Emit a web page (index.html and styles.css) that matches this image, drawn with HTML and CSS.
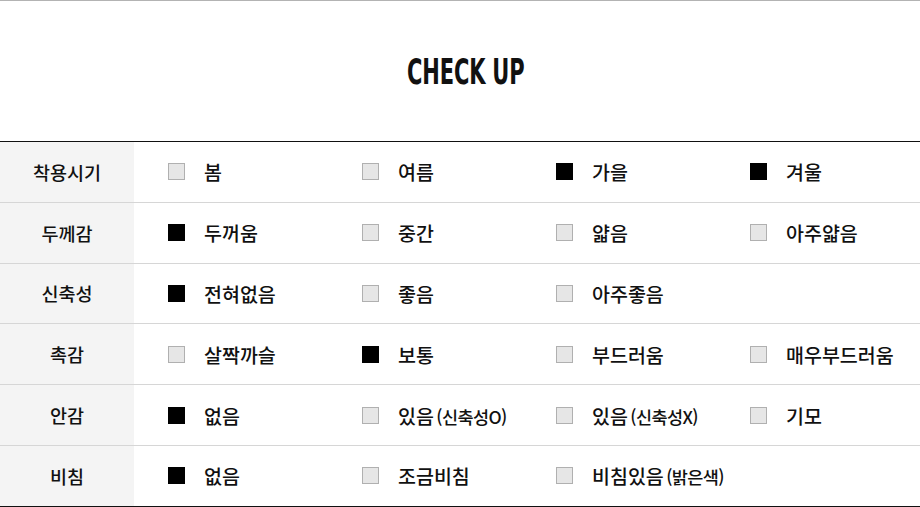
FILE: index.html
```html
<!DOCTYPE html>
<html lang="ko">
<head>
<meta charset="utf-8">
<link rel="stylesheet" href="styles.css">
</head>
<body>
<div class="page">
  <header class="head"><h1 class="title">CHECK UP</h1></header>
  <div class="table">
    <div class="row">
      <div class="label">착용시기</div>
      <div class="opt"><span class="box"></span><span class="txt">봄</span></div>
      <div class="opt"><span class="box"></span><span class="txt">여름</span></div>
      <div class="opt"><span class="box on"></span><span class="txt">가을</span></div>
      <div class="opt"><span class="box on"></span><span class="txt">겨울</span></div>
    </div>
    <div class="row">
      <div class="label">두께감</div>
      <div class="opt"><span class="box on"></span><span class="txt">두꺼움</span></div>
      <div class="opt"><span class="box"></span><span class="txt">중간</span></div>
      <div class="opt"><span class="box"></span><span class="txt">얇음</span></div>
      <div class="opt"><span class="box"></span><span class="txt">아주얇음</span></div>
    </div>
    <div class="row">
      <div class="label">신축성</div>
      <div class="opt"><span class="box on"></span><span class="txt">전혀없음</span></div>
      <div class="opt"><span class="box"></span><span class="txt">좋음</span></div>
      <div class="opt"><span class="box"></span><span class="txt">아주좋음</span></div>
      <div class="opt"></div>
    </div>
    <div class="row">
      <div class="label">촉감</div>
      <div class="opt"><span class="box"></span><span class="txt">살짝까슬</span></div>
      <div class="opt"><span class="box on"></span><span class="txt">보통</span></div>
      <div class="opt"><span class="box"></span><span class="txt">부드러움</span></div>
      <div class="opt"><span class="box"></span><span class="txt">매우부드러움</span></div>
    </div>
    <div class="row">
      <div class="label">안감</div>
      <div class="opt"><span class="box on"></span><span class="txt">없음</span></div>
      <div class="opt"><span class="box"></span><span class="txt">있음 <small class="sub">(신축성O)</small></span></div>
      <div class="opt"><span class="box"></span><span class="txt">있음 <small class="sub">(신축성X)</small></span></div>
      <div class="opt"><span class="box"></span><span class="txt">기모</span></div>
    </div>
    <div class="row last">
      <div class="label">비침</div>
      <div class="opt"><span class="box on"></span><span class="txt">없음</span></div>
      <div class="opt"><span class="box"></span><span class="txt">조금비침</span></div>
      <div class="opt"><span class="box"></span><span class="txt">비침있음 <small class="sub">(밝은색)</small></span></div>
      <div class="opt"></div>
    </div>
  </div>
</div>
</body>
</html>
```

FILE: styles.css
```css
html, body {
  margin: 0;
  padding: 0;
  background: #fff;
}
.page {
  width: 920px;
  border-top: 1px solid #b3b3b3;
  font-family: "Noto Sans CJK KR", "Noto Sans", sans-serif;
  color: #111;
}
.head {
  height: 140px;
  display: flex;
  align-items: center;
  justify-content: center;
}
.title {
  margin: 0 0 0 12px;
  font-family: "DejaVu Sans", sans-serif;
  font-weight: bold;
  font-size: 35px;
  letter-spacing: -0.3px;
  color: #111;
  transform: scaleX(0.6);
  padding-top: 2px;
}
.table {
  border-top: 1px solid #111;
  border-bottom: 1px solid #111;
}
.row {
  display: grid;
  grid-template-columns: 134px 194px 194px 194px 1fr;
  height: 59.8px;
  border-bottom: 1px solid #d6d6d6;
}
.row.last {
  border-bottom: none;
}
.label {
  background: #f4f4f4;
  display: flex;
  align-items: center;
  justify-content: center;
  font-size: 18.5px;
  font-weight: 500;
  color: #111;
}
.opt {
  display: flex;
  align-items: center;
  padding-left: 34px;
  font-size: 19.5px;
  font-weight: 500;
  color: #111;
}
.box {
  width: 15px;
  height: 15px;
  border: 1px solid #b0b0b0;
  background: #e6e6e6;
  margin-right: 19px;
  flex: none;
}
.box.on {
  background: #000;
  border-color: #000;
}
.txt {
  white-space: nowrap;
}
.sub {
  font-size: 17.5px;
  letter-spacing: -0.6px;
  margin-left: -3px;
}
```
